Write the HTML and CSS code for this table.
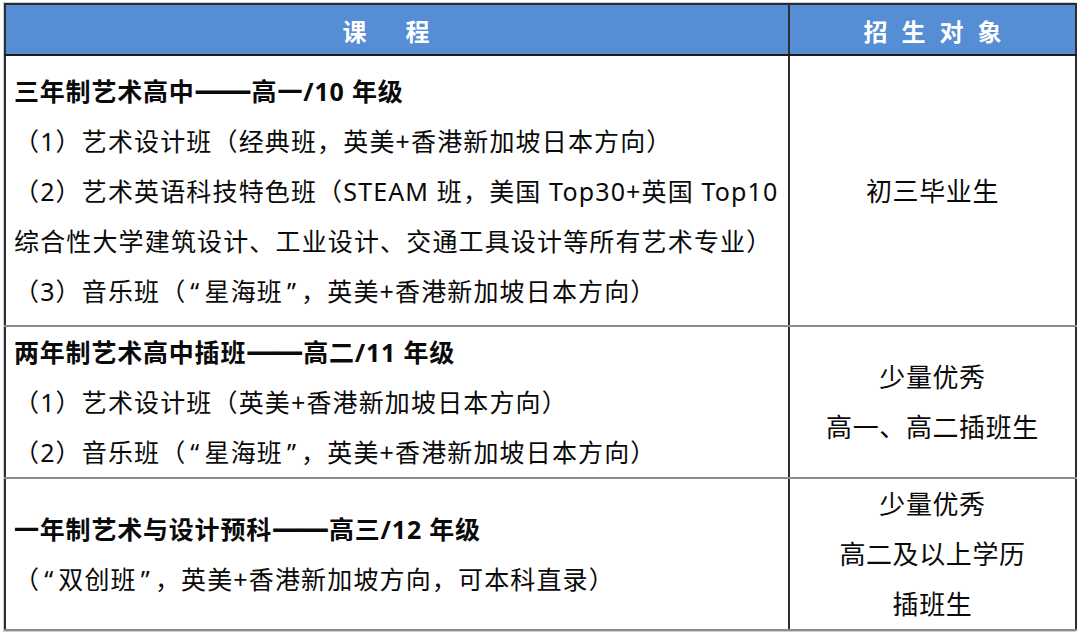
FILE: index.html
```html
<!DOCTYPE html>
<html lang="zh-CN">
<head>
<meta charset="utf-8">
<link rel="stylesheet" href="styles.css">
</head>
<body>
<div class="frame">
<table class="tbl">
  <colgroup><col class="c1"><col class="c2"></colgroup>
  <thead>
    <tr class="hrow">
      <th><div class="hd hd-wide"><span>课</span><span>程</span></div></th>
      <th><div class="hd hd-narrow"><span>招</span><span>生</span><span>对</span><span>象</span></div></th>
    </tr>
  </thead>
  <tbody>
    <tr class="r1">
      <td class="left">
        <div class="ln b">三年制艺术高中<span class="dash">——</span>高一/10 年级</div>
        <div class="ln">（1）艺术设计班（经典班，英美+香港新加坡日本方向）</div>
        <div class="ln">（2）艺术英语科技特色班（STEAM 班，美国 Top30+英国 Top10</div>
        <div class="ln">综合性大学建筑设计、工业设计、交通工具设计等所有艺术专业）</div>
        <div class="ln">（3）音乐班（<span class="q">“</span>星海班<span class="q">”</span>，英美+香港新加坡日本方向）</div>
      </td>
      <td class="right"><div class="ln">初三毕业生</div></td>
    </tr>
    <tr class="r2">
      <td class="left">
        <div class="ln b">两年制艺术高中插班<span class="dash">——</span>高二/11 年级</div>
        <div class="ln">（1）艺术设计班（英美+香港新加坡日本方向）</div>
        <div class="ln">（2）音乐班（<span class="q">“</span>星海班<span class="q">”</span>，英美+香港新加坡日本方向）</div>
      </td>
      <td class="right">
        <div class="ln">少量优秀</div>
        <div class="ln">高一、高二插班生</div>
      </td>
    </tr>
    <tr class="r3">
      <td class="left">
        <div class="ln b">一年制艺术与设计预科<span class="dash">——</span>高三/12 年级</div>
        <div class="ln">（<span class="q">“</span>双创班<span class="q">”</span>，英美+香港新加坡方向，可本科直录）</div>
      </td>
      <td class="right">
        <div class="ln">少量优秀</div>
        <div class="ln">高二及以上学历</div>
        <div class="ln">插班生</div>
      </td>
    </tr>
  </tbody>
</table>
</div>
</body>
</html>
```

FILE: styles.css
```css
html, body {
  margin: 0;
  padding: 0;
  background: #ffffff;
}
body {
  font-family: "Noto Sans", "Noto Sans CJK SC", sans-serif;
  color: #0a0a0a;
  text-spacing-trim: space-all;
}
.frame {
  margin: 2px 2px 0 3px;
  border: 1px solid #cfcfcf;
  width: 1071px;
  background: #ffffff;
}
.tbl {
  border-collapse: collapse;
  table-layout: fixed;
  width: 1071px;
  border: 2px solid #2a2a2a;
}
.c1 { width: 784px; }
.c2 { width: 287px; }
.tbl th,
.tbl td {
  padding: 0;
  border-left: 2px solid #2e2e2e;
  border-right: 2px solid #2e2e2e;
}
.hrow {
  height: 51px;
}
.hrow th {
  background: #558ed5;
  color: #ffffff;
  border-bottom: 2px solid #1c1c1c;
  font-weight: bold;
  font-size: 24px;
  vertical-align: middle;
  font-family: "Noto Sans CJK SC", sans-serif;
}
.hd {
  display: flex;
  justify-content: center;
  align-items: center;
  line-height: 30px;
  padding-top: 2px;
}
.hd-wide {
  gap: 39px;
  padding-right: 22px;
}
.hd-narrow {
  gap: 14px;
}
.tbl tbody td {
  border-bottom: 2px solid #8c8c8c;
  vertical-align: middle;
}
.r1 { height: 271px; }
.r2 { height: 152px; }
.r3 { height: 152px; }
.tbl td.left {
  padding-left: 8px;
}
.tbl td.right {
  text-align: center;
}
.ln {
  font-size: 25px;
  letter-spacing: 1.15px;
  line-height: 50px;
  height: 50px;
  white-space: nowrap;
}
.ln.b {
  font-weight: bold;
  letter-spacing: 0.8px;
}
.dash {
  font-size: 30px;
  letter-spacing: -3px;
  margin-right: 3px;
  line-height: 1;
}
.q {
  padding: 0 4px;
}
.right .ln {
  font-size: 26px;
  letter-spacing: 0.6px;
}
```
